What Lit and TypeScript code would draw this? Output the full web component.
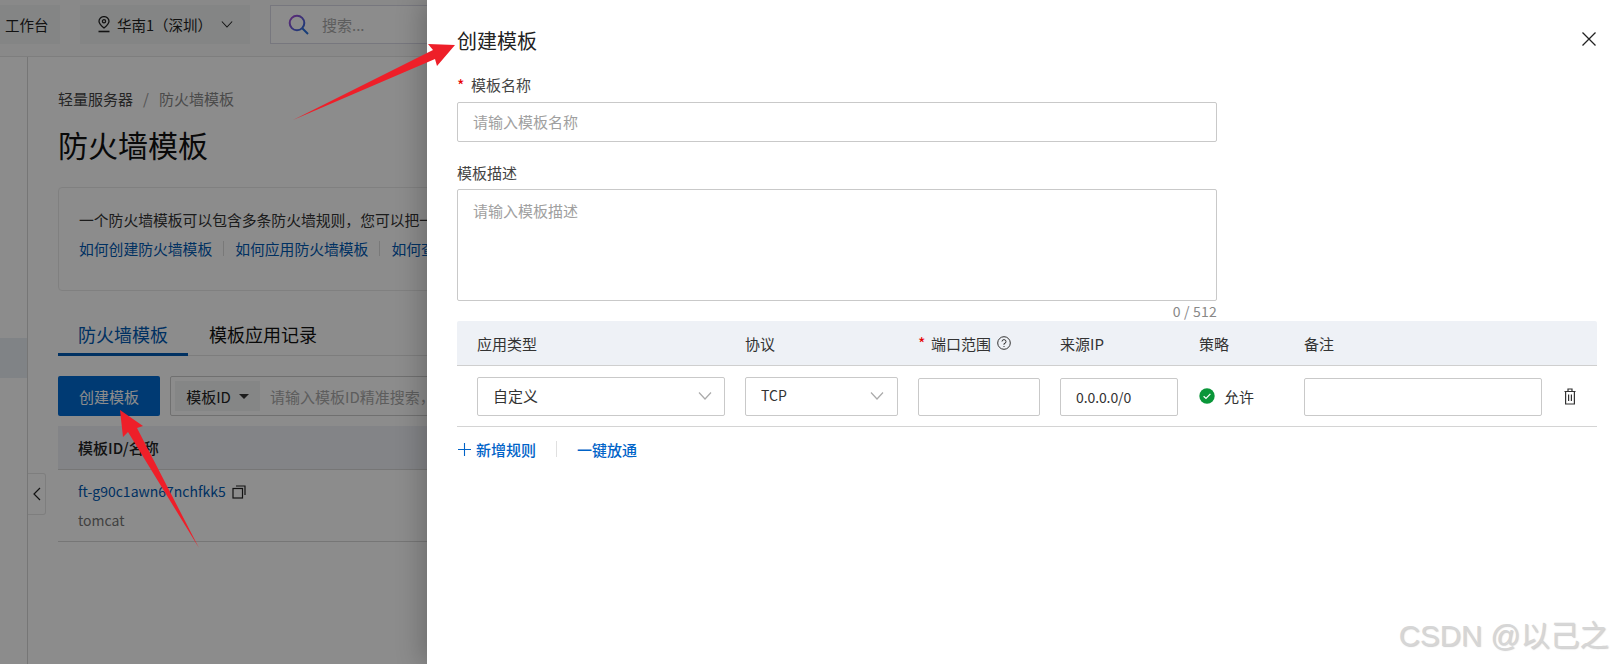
import { LitElement, html, css, svg } from "lit";
import { customElement } from "lit/decorators.js";

const chevron = svg`<path d="M1 1.5 L7 8 L13 1.5" fill="none" stroke="currentColor" stroke-width="1.2"/>`;

@customElement("app-root")
export class AppRoot extends LitElement {
  static styles = css`
    :host {
      display: block;
      position: relative;
      width: 1615px;
      height: 664px;
      overflow: hidden;
      background: #fff;
      font-family: "Noto Sans CJK SC", "Noto Sans", sans-serif;
      color: #333;
      font-size: 15px;
    }
    /* ---------- page behind the drawer ---------- */
    .page { display: flex; flex-direction: column; height: 664px; }
    .topbar {
      flex: none; height: 57px; box-sizing: border-box; display: flex; align-items: flex-start;
      padding-top: 5px; background: #fafafa; border-bottom: 1px solid #e6e6e6; gap: 20px;
    }
    .chip {
      height: 39px; background: #f0f3f3; display: flex; align-items: center; font-size: 14.5px; color: #222;
      box-sizing: border-box;
    }
    .chip.work { width: 60px; padding-left: 5px; }
    .chip.region { width: 170px; padding-left: 17px; gap: 6px; }
    .chip.region .chev { color: #222; margin-left: 3px; width: 12px; height: 9px; }
    .searchbox {
      width: 300px; height: 39px; box-sizing: border-box; border: 1px solid #d9d9e6; display: flex;
      align-items: center; padding-left: 17px; gap: 13px; color: #aaa; font-size: 15px; background: #fff;
    }
    .below { flex: 1; display: flex; min-height: 0; }
    .side { flex: none; width: 27px; border-right: 1px solid #d8d8d8; padding-top: 281px; position: relative; }
    .side-sel { height: 40px; background: #e9eef5; }
    .collapse {
      position: absolute; left: 28px; top: 473px; width: 18px; height: 42px; box-sizing: border-box;
      border: 1px solid #e6e6e6; border-left: none; border-radius: 0 3px 3px 0; background: #fff;
      display: flex; align-items: center; justify-content: center;
    }
    .main { flex: 1; padding: 31px 0 0 30px; min-width: 0; overflow: hidden; }
    .crumbs { display: flex; gap: 10px; font-size: 15px; line-height: 22px; color: #444; }
    .crumbs .sep { color: #999; }
    .crumbs .cur { color: #888; }
    h1 { font-size: 30px; font-weight: 400; line-height: 40px; margin: 14px 0 0; color: #111; }
    .intro {
      margin-top: 23px; box-sizing: border-box; width: 1500px; height: 104px; padding: 17px 20px;
      border: 1px solid #eaeaea; border-radius: 4px; background: #fff; line-height: 29px; white-space: nowrap;
      font-size: 14.8px; color: #333;
    }
    .intro .links { display: flex; align-items: center; gap: 11px; color: #0059b3; }
    .intro .bar { width: 1px; height: 15px; background: #ddd; }
    .tabs { margin-top: 23px; width: 1500px; display: flex; border-bottom: 1px solid #e3e3e3; height: 41px; font-size: 18px; }
    .tab { padding: 0 21px; line-height: 41px; color: #111; }
    .tab.on { padding: 0 20px; color: #0059b3; border-bottom: 3px solid #0059b3; height: 39px; width: 90px; text-align: center; white-space: nowrap; }
    .toolbar { display: flex; gap: 10px; margin-top: 20px; }
    .primary {
      width: 102px; height: 40px; border-radius: 2px; background: #006ad1; color: #fff; font-size: 15px;
      display: flex; align-items: center; justify-content: center;
    }
    .filter {
      width: 900px; height: 40px; box-sizing: border-box; border: 1px solid #cdcdcd; border-radius: 2px;
      display: flex; align-items: center; padding-left: 4px; gap: 10px; background: #fff; color: #aaa; font-size: 15px; white-space: nowrap;
    }
    .filter .pick {
      width: 85px; height: 30px; background: #f2f4f4; color: #222; display: flex; align-items: center;
      justify-content: center; gap: 8px; flex: none;
    }
    .caret { width: 0; height: 0; border: 5px solid transparent; border-top: 5px solid #333; border-bottom: none; }
    .thead {
      margin-top: 10px; width: 1500px; height: 44px; box-sizing: border-box; background: #eef1f6;
      border-bottom: 1px solid #d8d8d8; padding: 0 0 1px 20px; display: flex; align-items: center; font-weight: 500; color: #222; font-size: 15px;
    }
    .trow { width: 1500px; height: 72px; box-sizing: border-box; border-bottom: 1px solid #d8d8d8; padding: 7px 0 0 20px; font-size: 14px; line-height: 29px; }
    .trow .id { display: flex; align-items: center; gap: 6px; color: #0059b3; }
    .trow .nm { color: #777; }
    /* ---------- overlays ---------- */
    .mask { position: absolute; inset: 0; background: rgba(0,0,0,.45); }
    .drawer {
      position: absolute; left: 427px; top: 0; width: 1188px; height: 664px; box-sizing: border-box;
      background: #fff; box-shadow: -6px 0 24px rgba(0,0,0,.22); padding: 25px 17px 0 30px; display: flex; flex-direction: column;
    }
    .dhead { display: flex; justify-content: space-between; align-items: center; height: 30px; font-size: 20px; color: #222; }
    .close { width: 16px; height: 16px; margin: 0 1px 2px 0; }
    .lab { font-size: 15px; line-height: 22px; color: #444; display: flex; align-items: center; }
    .lab.req { margin-top: 19px; }
    .lab.desc { margin-top: 20px; }
    .star { color: #e60000; font-size: 16px; width: 14px; flex: none; line-height: 1; }
    .field { box-sizing: border-box; border: 1px solid #c9c9c9; border-radius: 2px; background: #fff; }
    .name { width: 760px; height: 40px; margin-top: 6px; padding: 0 0 1px 15px; display: flex; align-items: center; color: #a0a0a0; font-size: 15px; }
    .area { width: 760px; height: 112px; margin-top: 5px; padding: 10px 15px; color: #a0a0a0; font-size: 15px; line-height: 22px; }
    .count { width: 760px; text-align: right; font-size: 14px; line-height: 20px; height: 20px; color: #888; letter-spacing: .2px; }
    .rules { width: 1140px; display: grid; grid-template-columns: 20px 248px 20px 153px 20px 122px 20px 118px 21px 105px 238px 55px; }
    .rh {
      grid-column: 1 / -1; display: grid; grid-template-columns: subgrid; align-items: center; height: 45px; box-sizing: border-box;
      background: #eef1f6; border-bottom: 1px solid #cfcfcf; font-size: 15px; color: #333; border-radius: 2px 2px 0 0;
    }
    .rb {
      grid-column: 1 / -1; display: grid; grid-template-columns: subgrid; align-items: center; height: 61px; box-sizing: border-box;
      border-bottom: 1px solid #d4d4d4;
    }
    .c2 { grid-column: 2; } .c4 { grid-column: 4; } .c6 { grid-column: 6; } .c8 { grid-column: 8; } .c10 { grid-column: 10; } .c11 { grid-column: 11; } .c12 { grid-column: 12; }
    .port { display: flex; align-items: center; white-space: nowrap; }
    .port .star { width: 13px; }
    .port svg { margin-left: 6px; }
    .sel, .inp { height: 39px; display: flex; align-items: center; justify-content: space-between; font-size: 14px; color: #333; }
    .sel span { margin-bottom: 2px; }
    .inp { height: 38px; margin-top: 1px; }
    .sel.a { padding: 0 12px 0 15px; font-size: 15px; }
    .sel.b { padding: 0 13px 0 15px; }
    .sel svg { color: #aaa; width: 14px; height: 10px; }
    .inp.ip { padding-left: 15px; letter-spacing: -.1px; }
    .allow { display: flex; align-items: center; gap: 9px; font-size: 15px; color: #333; }
    .trash { display: flex; justify-content: center; }
    .acts { display: flex; align-items: center; height: 22px; margin-top: 11px; color: #0063c8; font-size: 15px; font-weight: 500; }
    .acts svg { margin: 0 5px 0 1px; }
    .acts .div { width: 1px; height: 16px; background: #e0e0e0; margin: 0 20px; }
    .arrows { position: absolute; inset: 0; width: 1615px; height: 664px; pointer-events: none; }
    .wm {
      position: absolute; right: 6px; top: 614px; font-size: 29.5px; line-height: 44px; white-space: nowrap; color: #d6d6d6;
      font-family: "Liberation Sans", "Noto Sans CJK SC", sans-serif; text-shadow: 1px 1px 1px rgba(120,120,120,.35);
    }
  `;

  render() {
    return html`
      <div class="page">
        <div class="topbar">
          <div class="chip work">工作台</div>
          <div class="chip region">
            <svg width="14" height="17" viewBox="0 0 14 17" fill="none" stroke="#222" stroke-width="1.3">
              <path d="M7 12 C4 9.5 2 7.5 2 5.2 A5 4.6 0 0 1 12 5.2 C12 7.5 10 9.5 7 12 Z"/>
              <circle cx="7" cy="5.3" r="1.6"/><path d="M1.5 15.5 H12.5" stroke-width="1.6"/>
            </svg>
            <span>华南1（深圳）</span>
            <svg class="chev" viewBox="0 0 14 10">${chevron}</svg>
          </div>
          <div class="searchbox">
            <svg width="21" height="21" viewBox="0 0 21 21" fill="none" stroke-width="2">
              <defs><linearGradient id="g" x1="0" x2="1" y1="0" y2="1"><stop offset="0" stop-color="#b04ad8"/><stop offset="1" stop-color="#2a6fdc"/></linearGradient></defs>
              <circle cx="9" cy="9" r="7.3" stroke="url(#g)"/><path d="M14.5 14.5 L20 20" stroke="#2a6fdc"/>
            </svg>
            <span>搜索...</span>
          </div>
        </div>
        <div class="below">
          <div class="side"><div class="side-sel"></div></div>
          <div class="main">
            <div class="crumbs"><span>轻量服务器</span><span class="sep">/</span><span class="cur">防火墙模板</span></div>
            <h1>防火墙模板</h1>
            <div class="intro">
              <div>一个防火墙模板可以包含多条防火墙规则，您可以把一</div>
              <div class="links"><span>如何创建防火墙模板</span><i class="bar"></i><span>如何应用防火墙模板</span><i class="bar"></i><span>如何查</span></div>
            </div>
            <div class="tabs"><div class="tab on">防火墙模板</div><div class="tab">模板应用记录</div></div>
            <div class="toolbar">
              <div class="primary">创建模板</div>
              <div class="filter"><div class="pick">模板ID<i class="caret"></i></div><span>请输入模板ID精准搜索，</span></div>
            </div>
            <div class="thead">模板ID/名称</div>
            <div class="trow">
              <div class="id"><span>ft-g90c1awn67nchfkk5</span>
                <svg width="14" height="14" viewBox="0 0 14 14" fill="none" stroke="#222" stroke-width="1.2">
                  <rect x="1" y="3.5" width="9.5" height="9.5"/><path d="M4 1 H13 V10"/>
                </svg>
              </div>
              <div class="nm">tomcat</div>
            </div>
          </div>
        </div>
        <div class="collapse">
          <svg width="8" height="14" viewBox="0 0 8 14" fill="none" stroke="#222" stroke-width="1.2"><path d="M7 1 L1 7 L7 13"/></svg>
        </div>
      </div>

      <div class="mask"></div>

      <div class="drawer">
        <div class="dhead">
          <span>创建模板</span>
          <svg class="close" viewBox="0 0 16 16" stroke="#222" stroke-width="1.3"><path d="M1.5 1.5 L14.5 14.5 M14.5 1.5 L1.5 14.5"/></svg>
        </div>
        <div class="lab req"><span class="star">*</span>模板名称</div>
        <div class="field name">请输入模板名称</div>
        <div class="lab desc">模板描述</div>
        <div class="field area">请输入模板描述</div>
        <div class="count">0 / 512</div>
        <div class="rules">
          <div class="rh">
            <span class="c2">应用类型</span>
            <span class="c4">协议</span>
            <span class="c6 port"><span class="star">*</span>端口范围
              <svg width="14" height="14" viewBox="0 0 14 14" fill="none" stroke="#333" stroke-width="1"><circle cx="7" cy="7" r="6.3"/><path d="M5 5.5 A2 2 0 1 1 7 7.6 V8.8"/><path d="M7 10 V11"/></svg>
            </span>
            <span class="c8">来源IP</span>
            <span class="c10">策略</span>
            <span class="c11">备注</span>
          </div>
          <div class="rb">
            <div class="c2 field sel a"><span>自定义</span><svg viewBox="0 0 14 10">${chevron}</svg></div>
            <div class="c4 field sel b"><span>TCP</span><svg viewBox="0 0 14 10">${chevron}</svg></div>
            <div class="c6 field inp"></div>
            <div class="c8 field inp ip">0.0.0.0/0</div>
            <div class="c10 allow">
              <svg width="16" height="16" viewBox="0 0 16 16"><circle cx="8" cy="8" r="7.7" fill="#0a9639"/><path d="M4.6 8.2 L7 10.5 L11.4 5.8" fill="none" stroke="#fff" stroke-width="1.2"/></svg>
              <span>允许</span>
            </div>
            <div class="c11 field inp"></div>
            <div class="c12 trash">
              <svg width="12" height="17" viewBox="0 0 12 17" fill="none" stroke="#333" stroke-width="1.2">
                <path d="M0.5 3.5 H11.5 M4 3.5 V1 H8 V3.5"/><path d="M1.6 3.5 V16 H10.4 V3.5"/><path d="M4.6 6.5 V13 M7.4 6.5 V13"/>
              </svg>
            </div>
          </div>
        </div>
        <div class="acts">
          <svg width="13" height="13" viewBox="0 0 13 13" stroke="#0063c8" stroke-width="1.1"><path d="M6.5 0 V13 M0 6.5 H13"/></svg>
          <span>新增规则</span><i class="div"></i><span>一键放通</span>
        </div>
      </div>

      <svg class="arrows" viewBox="0 0 1615 664">
        <polygon fill="#ee1f29" points="293,120 433,50 428,44 455,45 437,66 435,59"/>
        <polygon fill="#ee1f29" points="120,410 143,426 137,428 199,548 128,432 123,437"/>
      </svg>

      <div class="wm">CSDN @以己之</div>
    `;
  }
}
